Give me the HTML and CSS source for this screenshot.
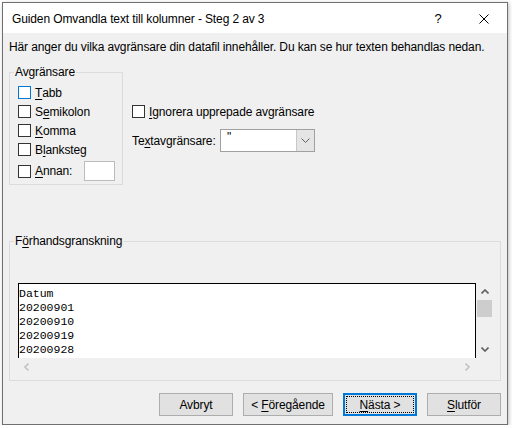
FILE: index.html
```html
<!DOCTYPE html>
<html lang="sv">
<head>
    <meta charset="UTF-8">
    <meta name="viewport" content="width=device-width, initial-scale=1.0">
    <title>Guiden Omvandla text till kolumner</title>
    <link rel="stylesheet" href="styles.css">
</head>
<body>
    <div class="window">
        <div class="titlebar">
            <span class="title">Guiden Omvandla text till kolumner - Steg 2 av 3</span>
            <span class="caption-btn help">?</span>
            <span class="caption-btn close">
                <svg width="10" height="10" viewBox="0 0 10 10"><path d="M0.5 0.5L9.5 9.5M9.5 0.5L0.5 9.5" stroke="#000" stroke-width="1" fill="none"/></svg>
            </span>
        </div>
        <div class="content">
            <p class="intro">Här anger du vilka avgränsare din datafil innehåller. Du kan se hur texten behandlas nedan.</p>
            <div class="options">
                <fieldset class="group delimiters">
                    <legend>Avgränsare</legend>
                    <label class="check"><span class="box focus"></span><u>T</u>abb</label>
                    <label class="check"><span class="box"></span>S<u>e</u>mikolon</label>
                    <label class="check"><span class="box"></span><u>K</u>omma</label>
                    <label class="check"><span class="box"></span>B<u>l</u>anksteg</label>
                    <div class="check other"><span class="box"></span><u>A</u>nnan:<span class="textbox"></span></div>
                </fieldset>
                <div class="side">
                    <label class="check"><span class="box"></span><u>I</u>gnorera upprepade avgränsare</label>
                    <div class="qualifier">
                        <span class="qualifier-label">Te<u>x</u>tavgränsare:</span>
                        <div class="combo">
                            <span class="combo-value">"</span>
                            <span class="combo-drop">
                                <svg width="9" height="5" viewBox="0 0 9 5"><path d="M0.5 0.5L4.5 4.5L8.5 0.5" stroke="#606060" stroke-width="1" fill="none"/></svg>
                            </span>
                        </div>
                    </div>
                </div>
            </div>
            <fieldset class="group preview">
                <legend>F<u>ö</u>rhandsgranskning</legend>
                <div class="grid-wrap">
                    <div class="grid-row">
                        <pre class="grid">Datum
20200901
20200910
20200919
20200928</pre>
                        <div class="vscroll">
                            <span class="arrow">
                                <svg width="8" height="5" viewBox="0 0 8 5"><path d="M0.5 4.5L4 1L7.5 4.5" stroke="#606060" stroke-width="1.6" fill="none"/></svg>
                            </span>
                            <span class="thumb"></span>
                            <span class="track"></span>
                            <span class="arrow">
                                <svg width="8" height="5" viewBox="0 0 8 5"><path d="M0.5 0.5L4 4L7.5 0.5" stroke="#606060" stroke-width="1.6" fill="none"/></svg>
                            </span>
                        </div>
                    </div>
                    <div class="hscroll">
                        <span class="arrow">
                            <svg width="5" height="8" viewBox="0 0 5 8"><path d="M4.5 0.5L1 4L4.5 7.5" stroke="#c4c4c4" stroke-width="1.6" fill="none"/></svg>
                        </span>
                        <span class="arrow">
                            <svg width="5" height="8" viewBox="0 0 5 8"><path d="M0.5 0.5L4 4L0.5 7.5" stroke="#c4c4c4" stroke-width="1.6" fill="none"/></svg>
                        </span>
                    </div>
                </div>
            </fieldset>
            <div class="buttons">
                <button class="btn">Avbryt</button>
                <button class="btn wide">&lt; <u>F</u>öregående</button>
                <button class="btn default"><u>N</u>ästa &gt;</button>
                <button class="btn"><u>S</u>lutför</button>
            </div>
        </div>
    </div>
</body>
</html>
```

FILE: styles.css
```css
body {
    margin: 0;
    background: #fff;
    font-family: "Liberation Sans", Arial, sans-serif;
    font-size: 12px;
    letter-spacing: -0.12px;
    color: #000;
}
u {
    text-underline-offset: 2px;
}
.window {
    margin: 2px 0 0 2px;
    width: 504px;
    height: 421px;
    border: 1px solid #707070;
    box-shadow: 1px 1px 4px rgba(0, 0, 0, 0.25);
    display: flex;
    flex-direction: column;
    background: #f0f0f0;
}
.titlebar {
    height: 30px;
    background: #fff;
    display: flex;
    align-items: center;
    flex-shrink: 0;
}
.title {
    flex: 1;
    padding-left: 9px;
    padding-top: 2px;
}
.caption-btn {
    width: 46px;
    height: 30px;
    display: flex;
    align-items: center;
    justify-content: center;
}
.help {
    font-size: 13px;
    padding-top: 1px;
}
.close svg {
    margin-top: 1px;
}
.content {
    flex: 1;
    padding: 0 6px;
}
.intro {
    margin: 6px 0 0;
    line-height: 16px;
}
.options {
    display: flex;
    margin-top: 9px;
}
.group {
    margin: 0;
    border: 1px solid #dcdcdc;
    min-width: 0;
}
.group legend {
    padding: 0 1px;
    margin-left: -4px;
    line-height: 16px;
}
.delimiters {
    width: 114px;
    box-sizing: border-box;
    padding: 3px 7px 3px 8px;
}
.check {
    display: flex;
    align-items: center;
    height: 19px;
}
.box {
    width: 11px;
    height: 11px;
    border: 1px solid #333;
    background: #fff;
    margin-right: 4px;
    flex-shrink: 0;
}
.box.focus {
    border-color: #0078d7;
}
.other {
    height: 20px;
    margin-top: 2px;
}
.textbox {
    margin-left: auto;
    width: 29px;
    height: 18px;
    border: 1px solid #bcbcbc;
    background: #fff;
}
.side {
    margin-left: 9px;
    padding-top: 38px;
}
.qualifier {
    display: flex;
    align-items: center;
    margin-top: 8px;
}
.qualifier-label {
    width: 88px;
}
.combo {
    width: 93px;
    height: 21px;
    border: 1px solid #a0a0a0;
    background: #fff;
    display: flex;
}
.combo-value {
    flex: 1;
    padding-left: 6px;
    line-height: 14px;
}
.combo-drop {
    width: 17px;
    background: #e5e5e5;
    border-left: 1px solid #c8c8c8;
    display: flex;
    align-items: center;
    justify-content: center;
}
.preview {
    margin-top: 48px;
    padding: 34px 6px 5px 8px;
}
.grid-row {
    display: flex;
}
.grid {
    margin: 0;
    width: 456px;
    height: 71px;
    padding-top: 3px;
    background: #fff;
    border: 1px solid #000;
    border-bottom: 0;
    font-family: "Liberation Mono", "Courier New", monospace;
    font-size: 11.5px;
    letter-spacing: 0;
    line-height: 14px;
    overflow: hidden;
}
.vscroll {
    width: 17px;
    display: flex;
    flex-direction: column;
    align-items: center;
}
.arrow {
    width: 17px;
    height: 17px;
    display: flex;
    align-items: center;
    justify-content: center;
}
.thumb {
    width: 15px;
    height: 17px;
    background: #cdcdcd;
}
.track {
    flex: 1;
}
.hscroll {
    width: 458px;
    height: 17px;
    display: flex;
    justify-content: space-between;
}
.buttons {
    display: flex;
    justify-content: flex-end;
    gap: 10px;
    margin-top: 12px;
}
.btn {
    width: 74px;
    height: 23px;
    padding: 0;
    background: #e1e1e1;
    border: 1px solid #adadad;
    font-family: inherit;
    font-size: 12px;
    letter-spacing: inherit;
    color: #000;
}
.btn.wide {
    width: 90px;
}
.btn.default {
    border: 2px solid #0078d7;
    outline: 1px dotted #000;
    outline-offset: -4px;
}
```
